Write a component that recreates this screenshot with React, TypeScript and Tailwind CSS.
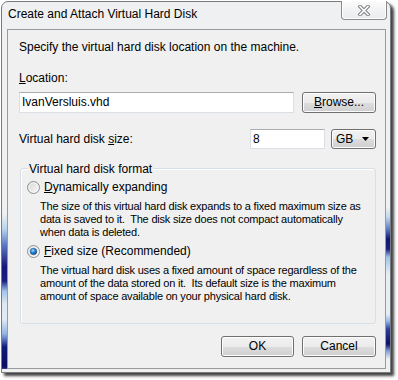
import React from 'react';

const btn =
  'flex items-center justify-center rounded-[3px] border border-[#707070] bg-[linear-gradient(to_bottom,#f2f2f2_0%,#ebebeb_50%,#dddddd_51%,#cfcfcf_100%)] shadow-[inset_0_0_0_1px_#fcfcfc]';

const textbox = 'border border-[#dbdfe6] border-t-[#abadb3] bg-white pl-[2px] flex items-center';

function Radio({ checked }: { checked?: boolean }) {
  return (
    <svg width="13" height="13" viewBox="0 0 13 13" className="shrink-0">
      <defs>
        <linearGradient id={checked ? 'rf1' : 'rf0'} x1="0" y1="0" x2="1" y2="1">
          <stop offset="0" stopColor="#d6d6d6" />
          <stop offset="1" stopColor="#fbfbfb" />
        </linearGradient>
        <radialGradient id="dot" cx="0.4" cy="0.35" r="0.7">
          <stop offset="0" stopColor="#a9ddff" />
          <stop offset="0.45" stopColor="#2b8ad6" />
          <stop offset="1" stopColor="#0b3f7a" />
        </radialGradient>
      </defs>
      <circle cx="6.5" cy="6.5" r="6" fill={`url(#${checked ? 'rf1' : 'rf0'})`} stroke="#8e8f8f" />
      <circle cx="6.5" cy="6.5" r="4.6" fill="none" stroke="#f4f4f4" strokeWidth="0.8" />
      {checked && <circle cx="6.5" cy="6.5" r="3.3" fill="url(#dot)" stroke="#1c4f8a" strokeWidth="0.5" />}
    </svg>
  );
}

export default function App() {
  return (
    <div className="w-[398px] h-[380px] bg-white pl-px pt-px font-['Liberation_Sans',sans-serif] text-[12px] leading-[15px] text-black">
      <div className="w-[390px] h-[372px] rounded-t-[7px] border border-[#7a7a7a] bg-[#eef0f2] shadow-[3px_3px_3px_rgba(0,0,0,0.75)] flex flex-col">
        {/* title bar */}
        <div className="h-[27px] flex items-start justify-between">
          <span className="mt-[5px] ml-[6px]">Create and Attach Virtual Hard Disk</span>
          <button className="-mt-px mr-[3px] w-[46px] h-[19px] rounded-b-[4px] border border-t-0 border-[#8a8a8a] bg-[linear-gradient(to_bottom,#fbfbfb,#e9ebee)] flex items-center justify-center shadow-[inset_0_0_0_1px_#ffffff]">
            <svg width="12" height="11" viewBox="0 0 12 11">
              <path d="M2 1.5 L10 9.5 M10 1.5 L2 9.5" stroke="#7d7d7d" strokeWidth="3.6" strokeLinecap="square" />
              <path d="M2 1.5 L10 9.5 M10 1.5 L2 9.5" stroke="#ffffff" strokeWidth="1.6" strokeLinecap="square" />
            </svg>
          </button>
        </div>

        <div className="flex h-[340px]">
          {/* left frame edge */}
          <div className="w-[5px] bg-[linear-gradient(to_bottom,#eef0f2_0px,#eef0f2_185px,#b9d3ee_200px,#5f7fc4_215px,#16167a_238px,#1a1f7e_252px,#9fc4ea_262px,#dfe8f2_275px,#e2ebf4_290px,#90b3e3_305px,#101a78_318px,#0b0d66_338px,#b8d2ee_346px,#eef0f2_352px)]" />

          {/* client */}
          <div className="w-[379px] border border-[#9a9a9a] bg-[#f0f0f0] pl-[11px] pr-[9px] pt-[10px] flex flex-col">
            <p>Specify the virtual hard disk location on the machine.</p>

            <p className="mt-[16px]"><u>L</u>ocation:</p>
            <div className="mt-[6px] flex justify-between">
              <div className={`${textbox} w-[275px] h-[21px]`}>IvanVersluis.vhd</div>
              <button className={`${btn} w-[74px] h-[21px]`}><span><u>B</u>rowse...</span></button>
            </div>

            <div className="mt-[16px] h-[20px] flex items-center">
              <span>Virtual hard disk <u>s</u>ize:</span>
              <div className={`${textbox} ml-auto w-[75px] h-[20px]`}>8</div>
              <button className={`${btn} ml-[6px] w-[45px] h-[20px] !justify-between px-[4px]`}>
                <span>GB</span>
                <svg width="7" height="4" viewBox="0 0 7 4" className="mr-[2px]"><path d="M0 0H7L3.5 4Z" fill="#000" /></svg>
              </button>
            </div>

            <div className="mt-[19px] ml-px h-[156px] rounded-[3px] border border-[#d5dfe5] shadow-[inset_1px_1px_0_#ffffff] pl-[6px] flex flex-col">
              <span className="-mt-[7px] ml-[1px] self-start bg-[#f0f0f0] px-[1px]">Virtual hard disk format</span>

              <label className="mt-[3px] flex items-center gap-[4px]">
                <Radio />
                <span><u>D</u>ynamically expanding</span>
              </label>
              <div className="mt-[5px] ml-[13px] text-[11px] leading-[13px] tracking-[-0.2px] whitespace-pre">
                <p>The size of this virtual hard disk expands to a fixed maximum size as</p>
                <p>data is saved to it.  The disk size does not compact automatically</p>
                <p>when data is deleted.</p>
              </div>

              <label className="mt-[5px] flex items-center gap-[4px]">
                <Radio checked />
                <span><u>F</u>ixed size (Recommended)</span>
              </label>
              <div className="mt-[5px] ml-[13px] text-[11px] leading-[13px] tracking-[-0.2px] whitespace-pre">
                <p>The virtual hard disk uses a fixed amount of space regardless of the</p>
                <p>amount of the data stored on it.  Its default size is the maximum</p>
                <p>amount of space available on your physical hard disk.</p>
              </div>
            </div>

            <div className="mt-[12px] flex justify-end gap-[8px]">
              <button className={`${btn} w-[73px] h-[21px]`}>OK</button>
              <button className={`${btn} w-[74px] h-[21px]`}>Cancel</button>
            </div>
          </div>

          {/* right frame edge */}
          <div className="flex-1 bg-[linear-gradient(to_bottom,#eef0f2_0px,#eef0f2_178px,#c2d9f0_188px,#5c7cc6_200px,#101877_210px,#1a2180_220px,#9ec3ea_228px,#e6edf5_245px,#e6edf5_285px,#9ab9e6_292px,#2d3f9c_300px,#0c0f6a_315px,#7f9fd8_322px,#eef0f2_330px)]" />
        </div>
        <div className="flex-1" />
      </div>
    </div>
  );
}
